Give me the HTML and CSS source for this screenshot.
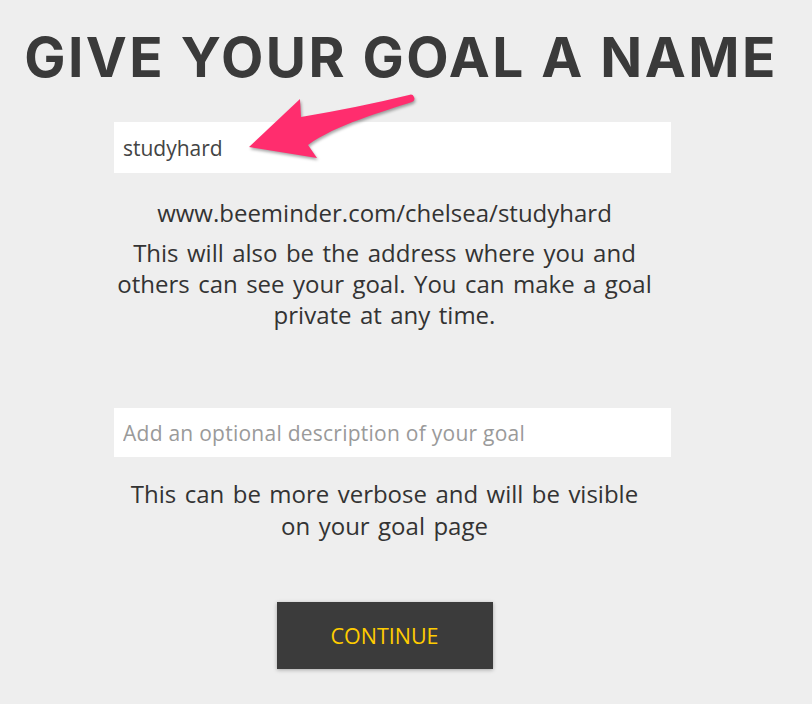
FILE: index.html
```html
<!DOCTYPE html>
<html lang="en">
<head>
<meta charset="utf-8">
<title>Give your goal a name</title>
<link rel="stylesheet" href="styles.css">
</head>
<body>
<main class="page">
  <h1 class="title">GIVE YOUR GOAL A NAME</h1>
  <div class="column">
    <input class="field field-name" type="text" value="studyhard" aria-label="Goal name">
    <p class="url">www.beeminder.com/chelsea/studyhard</p>
    <p class="note note-address">This will also be the address where you and others can see your goal. You can make a goal private at any time.</p>
    <input class="field field-desc" type="text" placeholder="Add an optional description of your goal" aria-label="Description">
    <p class="note note-desc">This can be more verbose and will be visible on your goal page</p>
    <div class="actions">
      <button class="continue" type="button">CONTINUE</button>
    </div>
  </div>
  <svg class="annotation" width="812" height="704" viewBox="0 0 812 704" aria-hidden="true">
    <path class="arrow" d="M249,147 L300,99 L301,117 Q360,107 409,95 A3.6,3.6 0 0 1 412,102 C385,111 335,125 308,145 L317,158 Z"/>
  </svg>
</main>
</body>
</html>
```

FILE: styles.css
```css
* { box-sizing: border-box; }

html, body {
  margin: 0;
  padding: 0;
  background: #eeeeee;
}

body {
  font-family: "Open Sans", Lato, sans-serif;
  color: #333333;
  width: 812px;
  height: 704px;
  overflow: hidden;
}

.page {
  position: relative;
  height: 704px;
}

.title {
  margin: 0;
  padding: 23px 10px 0 0;
  font-family: Inter, "Liberation Sans", sans-serif;
  font-weight: 700;
  font-size: 55px;
  line-height: 68px;
  letter-spacing: 2.45px;
  color: #3a3a3a;
  text-align: center;
  white-space: nowrap;
}

.column {
  margin: 31px 0 0 114px;
  width: 541px;
  display: flex;
  flex-direction: column;
  align-items: center;
}

.field {
  display: block;
  align-self: flex-start;
  width: 557px;
  border: 0;
  outline: none;
  background: #ffffff;
  padding: 0 0 0 9px;
  font-family: "Open Sans", Lato, sans-serif;
  font-size: 21px;
  color: #444444;
}

.field-name {
  height: 51px;
}

.field-desc {
  height: 49px;
  margin-top: 78px;
}

.field::placeholder {
  color: #9a9a9a;
  letter-spacing: 0.25px;
  opacity: 1;
}

.url {
  width: 538px;
  margin: 24px 0 0;
  font-size: 24px;
  line-height: 32px;
  text-align: center;
}

.note {
  width: 538px;
  margin: 5px 0 0;
  font-size: 24px;
  line-height: 32px;
  word-spacing: 2.2px;
  text-align: center;
}

.note-address {
  margin-top: 8px;
  line-height: 31px;
}

.note-desc {
  margin-top: 21px;
}

.actions {
  margin-top: 60px;
}

.continue {
  display: block;
  width: 216px;
  height: 67px;
  border: 0;
  background: #3b3b3b;
  color: #ffcc00;
  font-family: "Open Sans", Lato, sans-serif;
  font-size: 21.5px;
  font-weight: 500;
  box-shadow: 0 1px 4px rgba(0, 0, 0, 0.3);
  padding: 0;
}

.annotation {
  position: absolute;
  left: 0;
  top: 0;
  pointer-events: none;
}

.arrow {
  fill: #ff2d6e;
  filter: drop-shadow(1px 2px 1.5px rgba(0, 0, 0, 0.35));
}
```
